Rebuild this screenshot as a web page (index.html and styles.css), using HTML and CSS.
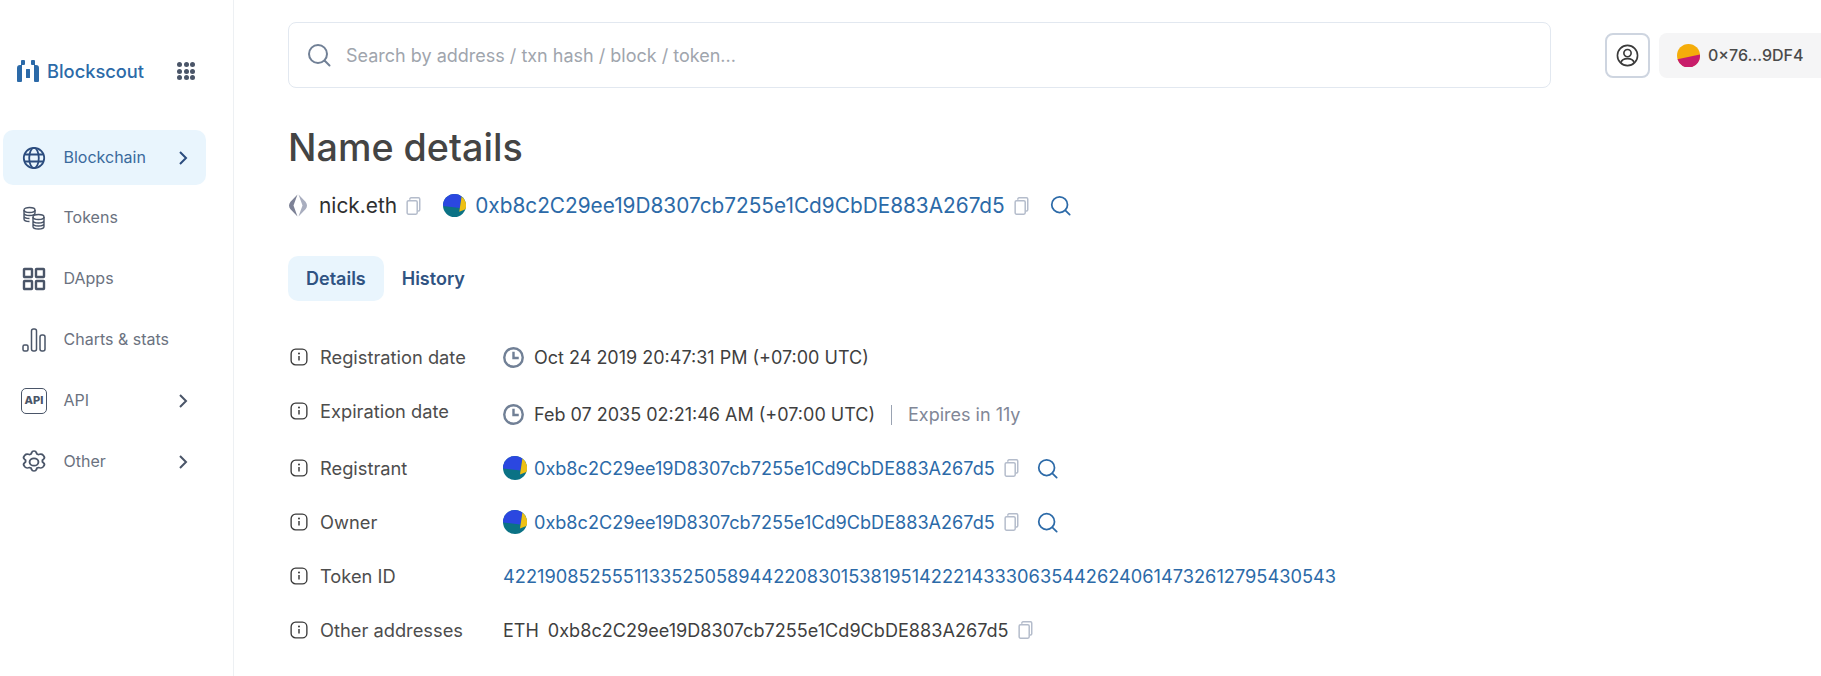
FILE: index.html
```html
<!DOCTYPE html>
<html lang="en">
<head>
    <meta charset="UTF-8">
    <meta name="viewport" content="width=device-width, initial-scale=1.0">
    <title>Name details</title>
    <link rel="stylesheet" href="styles.css">
</head>
<body>
    <svg class="defs" width="0" height="0">
        <symbol id="copy" viewBox="0 0 14 17">
            <path d="M3.500 2.500V2c0-.7.5-1.200 1.200-1.200h7c.7 0 1.200.5 1.200 1.200v10c0 .7-.5 1.200-1.200 1.200h-.7" fill="none" stroke="currentColor" stroke-width="1.400"/>
            <rect x="1" y="3.500" width="9.500" height="12.700" rx="1.300" fill="none" stroke="currentColor" stroke-width="1.400"/>
        </symbol>
        <symbol id="search" viewBox="0 0 24 24">
            <circle cx="11" cy="11" r="9" fill="none" stroke="currentColor" stroke-width="2"/>
            <path d="M17.500 17.500l5 5" fill="none" stroke="currentColor" stroke-width="2" stroke-linecap="round"/>
        </symbol>
        <symbol id="chevron" viewBox="0 0 12 14">
            <path d="M3 1L9 7 3 13" fill="none" stroke="currentColor" stroke-width="2"/>
        </symbol>
        <symbol id="info" viewBox="0 0 16 16">
            <rect x="1" y="1" width="14" height="14" rx="4" fill="none" stroke="currentColor" stroke-width="1.200"/>
            <path d="M8 7.200v4" stroke="currentColor" stroke-width="1.300"/>
            <circle cx="8" cy="4.900" r=".9" fill="currentColor"/>
        </symbol>
        <symbol id="clock" viewBox="0 0 20 20">
            <circle cx="10" cy="10" r="8.800" fill="none" stroke="currentColor" stroke-width="2.300"/>
            <path d="M10 4.500V10.500H15" fill="none" stroke="currentColor" stroke-width="2.300"/>
        </symbol>
        <symbol id="blockie" viewBox="0 0 24 24">
            <circle cx="12" cy="12" r="12" fill="#0b7285"/>
            <path d="M12 0A12 12 0 0 0 0 12v.5L17.500 14.500 19.400 2.500A12 12 0 0 0 12 0z" fill="#2b47e0"/>
            <path d="M19.400 2.500L17 18.400l6.400-2.400A12 12 0 0 0 19.400 2.500z" fill="#eec014"/>
        </symbol>
    </svg>

    <div class="page">
        <div class="sidebar">
            <div class="logo-row">
                <div class="logo">
                    <svg class="logo-icon" viewBox="0 0 22 22">
                        <path d="M0 8q0-3 3-3h1V1q0-1 1-1h2q1 0 1 1v3q0 1-1 1H5v16q0 1-1 1H1q-1 0-1-1zM22 8q0-3-3-3h-1V1q0-1-1-1h-2q-1 0-1 1v3q0 1 1 1h2v16q0 1 1 1h3q1 0 1-1zM9.500 9h3q.5 0 .5.5v8q0 .5-.5.5h-3q-.5 0-.5-.5v-8q0-.5.5-.5z" fill="#2c6aa8"/>
                    </svg>
                    <span>Blockscout</span>
                </div>
                <div class="dots">
                    <i></i><i></i><i></i><i></i><i></i><i></i><i></i><i></i><i></i>
                </div>
            </div>

            <ul class="nav">
                <li class="nav-item active">
                    <svg class="nav-icon" viewBox="0 0 24 24" fill="none" stroke="currentColor" stroke-width="1.800">
                        <circle cx="12" cy="12" r="10.200"/>
                        <ellipse cx="12" cy="12" rx="4.800" ry="10.200"/>
                        <path d="M2.500 8.500h19M2.500 15.500h19"/>
                    </svg>
                    <span>Blockchain</span>
                    <svg class="nav-arrow"><use href="#chevron"/></svg>
                </li>
                <li class="nav-item">
                    <svg class="nav-icon" viewBox="0 0 24 24" fill="none" stroke="currentColor" stroke-width="1.400">
                        <ellipse cx="7.500" cy="4" rx="5.500" ry="2.500"/>
                        <path d="M2 4v9c0 1.400 2.500 2.500 5.500 2.500M2 7c0 1.400 2.500 2.500 5.500 2.500S13 8.400 13 7V4M2 10c0 1.400 2.500 2.500 5.500 2.500"/>
                        <ellipse cx="16.500" cy="11" rx="5.500" ry="2.500"/>
                        <path d="M11 11v9.500c0 1.400 2.500 2.500 5.500 2.500s5.500-1.100 5.500-2.500V11M11 14.500c0 1.400 2.500 2.500 5.500 2.500s5.500-1.100 5.500-2.500M11 17.500c0 1.400 2.500 2.500 5.500 2.500s5.500-1.100 5.500-2.500"/>
                    </svg>
                    <span>Tokens</span>
                </li>
                <li class="nav-item">
                    <svg class="nav-icon" viewBox="0 0 24 24" fill="none" stroke="currentColor" stroke-width="2.400">
                        <rect x="2" y="2" width="8" height="8" rx=".5"/>
                        <rect x="14" y="2" width="8" height="8" rx=".5"/>
                        <rect x="2" y="14" width="8" height="8" rx=".5"/>
                        <rect x="14" y="14" width="8" height="8" rx=".5"/>
                    </svg>
                    <span>DApps</span>
                </li>
                <li class="nav-item">
                    <svg class="nav-icon" viewBox="0 0 24 24" fill="none" stroke="currentColor" stroke-width="1.500">
                        <rect x="1" y="17" width="5" height="6" rx="1.500"/>
                        <rect x="9.500" y="1" width="5" height="22" rx="2"/>
                        <rect x="18" y="7" width="5" height="16" rx="2"/>
                    </svg>
                    <span>Charts &amp; stats</span>
                </li>
                <li class="nav-item">
                    <div class="api-icon">API</div>
                    <span>API</span>
                    <svg class="nav-arrow"><use href="#chevron"/></svg>
                </li>
                <li class="nav-item">
                    <svg class="nav-icon" viewBox="2.500 .5 19 23" preserveAspectRatio="none" fill="none" stroke="currentColor" stroke-width="1.500">
                        <path d="M12 1.500c1 0 1.700.8 2 1.800l.3 1 1.200.6 1-.3c1.100-.3 2.100 0 2.700.9l.7 1.200c.5.900.3 2-.4 2.700l-.8.800v1.800l.8.8c.7.700.9 1.800.4 2.700l-.7 1.200c-.6.900-1.600 1.200-2.700.9l-1-.3-1.200.6-.3 1c-.3 1-1 1.800-2 1.800s-1.700-.8-2-1.800l-.3-1-1.200-.6-1 .3c-1.100.3-2.100 0-2.700-.9l-.7-1.200c-.5-.9-.3-2 .4-2.700l.8-.8v-1.800l-.8-.8c-.7-.7-.9-1.800-.4-2.700l.7-1.200c.6-.9 1.600-1.200 2.700-.9l1 .3 1.200-.6.3-1c.3-1 1-1.800 2-1.800z"/>
                        <circle cx="12" cy="12" r="3.500"/>
                    </svg>
                    <span>Other</span>
                    <svg class="nav-arrow"><use href="#chevron"/></svg>
                </li>
            </ul>
        </div>

        <div class="main-content">
            <div class="topbar">
                <div class="search-box">
                    <svg class="search-icon"><use href="#search"/></svg>
                    <span>Search by address / txn hash / block / token...</span>
                </div>
                <div class="profile-btn">
                    <svg viewBox="0 0 24 24" fill="none" stroke="currentColor" stroke-width="1.700">
                        <circle cx="12" cy="12" r="10.500"/>
                        <circle cx="12" cy="9.500" r="3.800"/>
                        <path d="M5 19.500c1-3 3.500-4.200 7-4.200s6 1.200 7 4.200"/>
                    </svg>
                </div>
                <div class="wallet">
                    <svg class="wallet-icon" viewBox="0 0 24 24">
                        <circle cx="12" cy="12" r="12" fill="#f5ad0a"/>
                        <path d="M.5 16L23.900 11A12 12 0 0 1 .5 16z" fill="#c81d6b"/>
                    </svg>
                    <span>0×76...9DF4</span>
                </div>
            </div>

            <h1>Name details</h1>

            <div class="name-row">
                <svg class="ens-icon" viewBox="0 0 20 24" preserveAspectRatio="none">
                    <path d="M9.500 .5L2.500 8q-3 4 0 8l7 7.500L5.500 12z" fill="#7d8296"/>
                    <path d="M10.500 .5l7 7.500q3 4 0 8l-7 7.500L14.500 12z" fill="#a9aebf"/>
                </svg>
                <span class="name">nick.eth</span>
                <svg class="copy name-copy"><use href="#copy"/></svg>
                <svg class="blockie-big"><use href="#blockie"/></svg>
                <a class="address-big">0xb8c2C29ee19D8307cb7255e1Cd9CbDE883A267d5</a>
                <svg class="copy address-copy"><use href="#copy"/></svg>
                <svg class="lens lens-big"><use href="#search"/></svg>
            </div>

            <div class="tabs">
                <div class="tab selected">Details</div>
                <div class="tab">History</div>
            </div>

            <div class="details">
                <div class="label"><svg class="info"><use href="#info"/></svg>Registration date</div>
                <div class="value">
                    <svg class="clock"><use href="#clock"/></svg>
                    <span>Oct 24 2019 20:47:31 PM (+07:00 UTC)</span>
                </div>

                <div class="label label-up"><svg class="info"><use href="#info"/></svg>Expiration date</div>
                <div class="value value-down">
                    <svg class="clock"><use href="#clock"/></svg>
                    <span>Feb 07 2035 02:21:46 AM (+07:00 UTC)</span>
                    <span class="divider"></span>
                    <span class="muted">Expires in 11y</span>
                </div>

                <div class="label"><svg class="info"><use href="#info"/></svg>Registrant</div>
                <div class="value">
                    <svg class="blockie"><use href="#blockie"/></svg>
                    <a>0xb8c2C29ee19D8307cb7255e1Cd9CbDE883A267d5</a>
                    <svg class="copy"><use href="#copy"/></svg>
                    <svg class="lens"><use href="#search"/></svg>
                </div>

                <div class="label"><svg class="info"><use href="#info"/></svg>Owner</div>
                <div class="value">
                    <svg class="blockie"><use href="#blockie"/></svg>
                    <a>0xb8c2C29ee19D8307cb7255e1Cd9CbDE883A267d5</a>
                    <svg class="copy"><use href="#copy"/></svg>
                    <svg class="lens"><use href="#search"/></svg>
                </div>

                <div class="label"><svg class="info"><use href="#info"/></svg>Token ID</div>
                <div class="value">
                    <a class="token">42219085255511335250589442208301538195142221433306354426240614732612795430543</a>
                </div>

                <div class="label"><svg class="info"><use href="#info"/></svg>Other addresses</div>
                <div class="value">
                    <span class="eth">ETH</span>
                    <a class="plain">0xb8c2C29ee19D8307cb7255e1Cd9CbDE883A267d5</a>
                    <svg class="copy"><use href="#copy"/></svg>
                </div>
            </div>
        </div>
    </div>
</body>
</html>
```

FILE: styles.css
```css
* {
    margin: 0;
    padding: 0;
    box-sizing: border-box;
    font-family: 'Inter', sans-serif;
}

body {
    background-color: #fff;
    color: #3a3a3a;
    height: 676px;
    overflow: hidden;
}

.defs {
    position: absolute;
}

.page {
    display: flex;
    height: 676px;
}

/* Sidebar */
.sidebar {
    width: 234px;
    flex-shrink: 0;
    border-right: 1px solid #edf0f3;
    padding: 59px 0 0 3px;
}

.logo-row {
    display: flex;
    align-items: center;
    justify-content: space-between;
    padding: 0 38px 0 14px;
    height: 24px;
}

.logo {
    display: flex;
    align-items: center;
    gap: 8px;
    color: #2c6aa8;
    font-size: 18.300px;
    font-weight: 500;
}

.logo-icon {
    width: 22px;
    height: 22px;
}

.dots {
    display: grid;
    grid-template-columns: repeat(3, 5px);
    gap: 1.500px;
}

.dots i {
    width: 5px;
    height: 5px;
    border-radius: 50%;
    background-color: #4a5568;
}

.nav {
    list-style: none;
    margin-top: 47px;
    width: 203px;
}

.nav-item {
    display: flex;
    align-items: center;
    height: 55px;
    margin-bottom: 5.900px;
    padding-left: 19px;
    border-radius: 10px;
    font-size: 16px;
    color: #6b7280;
}

.nav-item.active {
    background-color: #e9f5fd;
    color: #3a6a9c;
}

.nav-item span {
    flex: 1;
    margin-left: 17.500px;
    padding-bottom: 2px;
}

.nav-icon {
    width: 24px;
    height: 24px;
    color: #4a5568;
    flex-shrink: 0;
}

.nav-item.active .nav-icon {
    color: #2b4c7e;
}

.api-icon {
    width: 26px;
    height: 26px;
    margin: 0 -1px;
    flex-shrink: 0;
    border: 1.500px solid #4a5568;
    border-radius: 5px;
    color: #4a5568;
    font-size: 11px;
    font-weight: 800;
    line-height: 23px;
    text-align: center;
}

.nav-arrow {
    width: 12px;
    height: 14px;
    margin-right: 17px;
    color: #4a5568;
}

.nav-item.active .nav-arrow {
    color: #2b4c7e;
}

/* Main */
.main-content {
    flex: 1;
    padding: 22px 0 0 54px;
    min-width: 0;
}

.topbar {
    display: flex;
    align-items: center;
}

.search-box {
    width: 1263px;
    height: 66px;
    display: flex;
    align-items: center;
    gap: 15px;
    padding-left: 18px;
    border: 1px solid #e2e8f0;
    border-radius: 8px;
    font-size: 18px;
    color: #a0a5ad;
}

.search-icon {
    width: 24px;
    height: 24px;
    color: #718096;
}

.profile-btn {
    width: 45px;
    height: 45px;
    margin-left: 54px;
    display: flex;
    align-items: center;
    justify-content: center;
    border: 2px solid #ced5e0;
    border-radius: 8px;
}

.profile-btn svg {
    width: 23px;
    height: 23px;
}

.wallet {
    height: 45px;
    margin-left: 9px;
    flex: 1;
    display: flex;
    align-items: center;
    gap: 8px;
    padding-left: 18px;
    background-color: #f5f5f6;
    border-radius: 8px 0 0 8px;
    font-size: 16px;
    font-weight: 500;
    color: #4a4a4a;
}

.wallet-icon {
    width: 23px;
    height: 23px;
}

h1 {
    margin-top: 37px;
    font-size: 37.700px;
    font-weight: 500;
    line-height: 44px;
    color: #444;
}

.name-row {
    display: flex;
    align-items: center;
    margin-top: 23px;
    height: 27px;
}

.ens-icon {
    width: 20px;
    height: 23px;
}

.name {
    margin-left: 11px;
    font-size: 20.900px;
    color: #2f2f2f;
}

.copy {
    width: 15px;
    height: 18px;
    color: #b4bccb;
    flex-shrink: 0;
}

.name-copy {
    margin-left: 9px;
}

.blockie-big {
    width: 23px;
    height: 23px;
    margin-left: 22px;
}

.address-big {
    margin-left: 9px;
    font-size: 20.800px;
    color: #2c6aa8;
}

.address-copy {
    margin-left: 9px;
}

.lens {
    width: 21px;
    height: 21px;
    margin-left: 18px;
    color: #2c6aa8;
}

.lens-big {
    margin-left: 21px;
}

.tabs {
    display: flex;
    gap: 0;
    margin-top: 37px;
}

.tab {
    height: 45px;
    padding: 0 18px;
    border-radius: 10px;
    font-size: 18px;
    font-weight: 600;
    line-height: 45px;
    color: #2f5382;
}

.tab.selected {
    background-color: #e9f5fd;
}

/* Details list */
.details {
    display: grid;
    grid-template-columns: 215px 1fr;
    grid-template-rows: 54px 57px 54px 54px 54px 54px;
    margin-top: 29px;
    font-size: 18px;
}

.label {
    display: flex;
    align-items: center;
    gap: 12px;
    padding-left: 2px;
    color: #4d4d4d;
    font-size: 18.300px;
}

.label-up {
    margin-bottom: 4px;
}

.info {
    width: 18px;
    height: 18px;
    color: #3a3a3a;
}

.value {
    display: flex;
    align-items: center;
    color: #3f3f3f;
}

.value-down {
    margin-top: 4px;
}

.value a {
    font-size: 18.100px;
    color: #2c6aa8;
}

.value a.token {
    font-size: 18.230px;
}

.value a.plain {
    color: #3f3f3f;
}

.clock {
    width: 21px;
    height: 21px;
    margin-right: 10px;
    color: #718096;
}

.blockie {
    width: 24px;
    height: 24px;
    margin-right: 7px;
}

.value .copy {
    margin-left: 9px;
}

.divider {
    width: 1px;
    height: 20px;
    margin: 0 16px;
    background-color: #9aa3b2;
}

.muted {
    color: #818797;
}

.eth {
    margin-right: 9px;
}
```
